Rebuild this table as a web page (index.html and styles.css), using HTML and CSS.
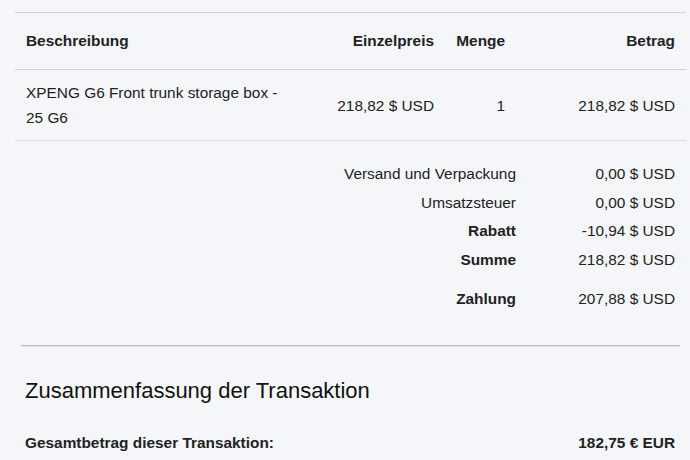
FILE: index.html
```html
<!DOCTYPE html>
<html lang="de">
<head>
<meta charset="utf-8">
<title>Transaktion</title>
<link rel="stylesheet" href="styles.css">
</head>
<body>
<div class="page">
  <table class="items">
    <colgroup>
      <col class="c-desc">
      <col class="c-price">
      <col class="c-qty">
      <col class="c-amount">
    </colgroup>
    <thead>
      <tr>
        <th class="left">Beschreibung</th>
        <th class="right">Einzelpreis</th>
        <th class="right">Menge</th>
        <th class="right">Betrag</th>
      </tr>
    </thead>
    <tbody>
      <tr>
        <td class="left">XPENG G6 Front trunk storage box - 25 G6</td>
        <td class="right">218,82 $ USD</td>
        <td class="right">1</td>
        <td class="right">218,82 $ USD</td>
      </tr>
    </tbody>
  </table>

  <div class="totals">
    <div class="label">Versand und Verpackung</div>
    <div class="value">0,00 $ USD</div>
    <div class="label">Umsatzsteuer</div>
    <div class="value">0,00 $ USD</div>
    <div class="label strong">Rabatt</div>
    <div class="value">-10,94 $ USD</div>
    <div class="label strong">Summe</div>
    <div class="value">218,82 $ USD</div>
    <div class="label strong pay">Zahlung</div>
    <div class="value pay">207,88 $ USD</div>
  </div>

  <hr class="divider">

  <section class="summary">
    <h2 class="summary-title">Zusammenfassung der Transaktion</h2>
    <div class="summary-row">
      <span>Gesamtbetrag dieser Transaktion:</span>
      <span>182,75 € EUR</span>
    </div>
  </section>
</div>
</body>
</html>
```

FILE: styles.css
```css
html, body {
  margin: 0;
  padding: 0;
  background: #f5f6fa;
}

body {
  font-family: "Liberation Sans", Arial, sans-serif;
  font-size: 15.4px;
  color: #222;
}

.page {
  padding: 12px 0 0 15px;
  width: 671px;
}

.items {
  width: 671px;
  border-collapse: collapse;
  table-layout: fixed;
  border-top: 1px solid #cfd1d6;
}

.c-desc { width: 290px; }
.c-price { width: 140px; }
.c-qty { width: 71px; }
.c-amount { width: 170px; }

.items th {
  font-weight: bold;
  line-height: 24px;
  padding: 16px 11px;
  border-bottom: 1px solid #cfd1d6;
}

.items td {
  line-height: 25px;
  padding: 10px 11px;
  vertical-align: middle;
  border-bottom: 1px solid #d8dade;
}

.left { text-align: left; }
.right { text-align: right; }

.totals {
  display: grid;
  grid-template-columns: 501px 170px;
  margin-top: 19px;
  line-height: 28.5px;
}

.totals .label {
  text-align: right;
}

.totals .value {
  text-align: right;
  padding-right: 11px;
}

.totals .strong {
  font-weight: bold;
}

.totals .pay {
  margin-top: 11px;
}

.divider {
  margin: 31px 0 0 6px;
  width: 659px;
  height: 0;
  border: 0;
  border-top: 1px solid #b9bbbf;
  border-bottom: 1px solid #e2e3e6;
}

.summary {
  padding: 0 11px 0 10px;
}

.summary-title {
  margin: 30px 0 0 0;
  font-size: 22px;
  font-weight: normal;
  line-height: 28px;
  color: #111;
}

.summary-row {
  display: flex;
  justify-content: space-between;
  font-weight: bold;
  margin-top: 26px;
  line-height: 24px;
}
```
